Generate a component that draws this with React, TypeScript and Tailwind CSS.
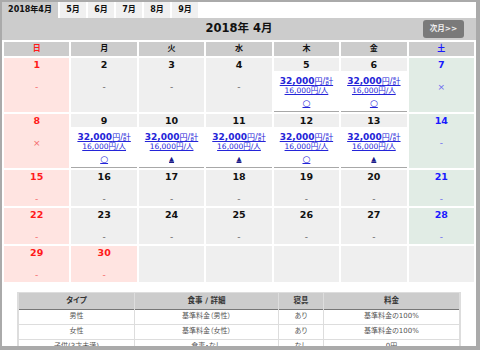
import React from 'react';

type Kind = 'sun' | 'sat' | 'wk' | 'none';

interface Day {
  d?: number;
  kind: Kind;
  mark?: string;
  price?: '○' | '▲';
}

const wk = (d: number, extra: Partial<Day> = {}): Day => ({ d, kind: 'wk', mark: '-', ...extra });

const rows: Day[][] = [
  [
    { d: 1, kind: 'sun', mark: '-' },
    wk(2),
    wk(3),
    wk(4),
    wk(5, { price: '○' }),
    wk(6, { price: '○' }),
    { d: 7, kind: 'sat', mark: '×' },
  ],
  [
    { d: 8, kind: 'sun', mark: '×' },
    wk(9, { price: '○' }),
    wk(10, { price: '▲' }),
    wk(11, { price: '▲' }),
    wk(12, { price: '○' }),
    wk(13, { price: '▲' }),
    { d: 14, kind: 'sat', mark: '-' },
  ],
  [{ d: 15, kind: 'sun', mark: '-' }, wk(16), wk(17), wk(18), wk(19), wk(20), { d: 21, kind: 'sat', mark: '-' }],
  [{ d: 22, kind: 'sun', mark: '-' }, wk(23), wk(24), wk(25), wk(26), wk(27), { d: 28, kind: 'sat', mark: '-' }],
  [
    { d: 29, kind: 'sun', mark: '-' },
    { d: 30, kind: 'sun', mark: '-' },
    { kind: 'none' },
    { kind: 'none' },
    { kind: 'none' },
    { kind: 'none' },
    { kind: 'none' },
  ],
];

const bgFor: Record<Kind, string> = {
  sun: 'bg-[#ffe4e1]',
  sat: 'bg-[#e1ece5]',
  wk: 'bg-[#efefef]',
  none: 'bg-[#efefef]',
};

const numColor: Record<Kind, string> = {
  sun: 'text-[#ff1a1a]',
  sat: 'text-[#1a1aff]',
  wk: 'text-[#111111]',
  none: '',
};

const markColor: Record<Kind, string> = {
  sun: 'text-[#f46a6a]',
  sat: 'text-[#6a6af0]',
  wk: 'text-[#666666]',
  none: '',
};

const Cell: React.FC<{ day: Day }> = ({ day }) => {
  if (day.kind === 'none') return <div className={`${bgFor.none} min-h-[36px]`} />;
  return (
    <div className={`${bgFor[day.kind]} flex flex-col pt-px`}>
      <div className={`h-[12px] leading-[12px] text-center text-[9.5px] font-bold ${numColor[day.kind]}`}>{day.d}</div>
      {day.price ? (
        <div className="bg-white border-b border-[#a8a8a8] pt-[2px] pb-[2px] flex flex-col items-center text-[#2424d8]">
          <div className="h-[12px] leading-[12px] underline whitespace-nowrap">
            <span className="text-[9px] font-bold">32,000</span>
            <span className="text-[8px]">円/計</span>
          </div>
          <div className="h-[12px] leading-[12px] underline text-[7.5px] whitespace-nowrap">16,000円/人</div>
          <div
            className={`h-[12px] leading-[12px] underline ${
              day.price === '▲' ? 'text-[6.5px] text-[#1c1c8a]' : 'text-[9px] text-[#2424d8]'
            }`}
          >
            {day.price}
          </div>
        </div>
      ) : (
        <div className={`pt-[10px] pb-px h-[23px] leading-[12px] text-center text-[9px] ${markColor[day.kind]}`}>
          {day.mark}
        </div>
      )}
    </div>
  );
};

const weekNames = ['日', '月', '火', '水', '木', '金', '土'];
const months = ['5月', '6月', '7月', '8月', '9月'];

const tableRows = [
  ['男性', '基準料金（男性）', 'あり', '基準料金の100%'],
  ['女性', '基準料金（女性）', 'あり', '基準料金の100%'],
  ['子供(3才未満)', '食事・なし', 'なし', '0円'],
];

export default function App() {
  return (
    <div
      className="w-[480px] h-[350px] overflow-hidden bg-white border-[#aaaaaa] border-l-2 border-t-2 border-r-4 border-b-4 text-[#111]"
      style={{ fontFamily: '"DejaVu Sans", "Noto Sans CJK JP", sans-serif' }}
    >
      {/* Month tabs */}
      <div className="flex gap-[2px] h-[16px]">
        <div className="w-[56px] bg-[#cccccc] flex items-center justify-center text-[8px] font-bold">2018年4月</div>
        {months.map((m) => (
          <div key={m} className="w-[26px] bg-[#f0f0f0] flex items-center justify-center text-[8px] font-bold">
            {m}
          </div>
        ))}
      </div>

      {/* Title bar */}
      <div className="h-[22px] bg-[#cccccc] grid grid-cols-[1fr_auto_1fr] items-center">
        <div />
        <div className="text-[11.5px] font-bold">2018年 4月</div>
        <div className="flex justify-end pr-[12px]">
          <div className="w-[41px] h-[18px] rounded-[3px] bg-[#7a7a7a] text-[#f0f0f0] text-[7.5px] font-bold flex items-center justify-center">
            次月&gt;&gt;
          </div>
        </div>
      </div>

      {/* Calendar */}
      <div className="grid grid-cols-7 gap-[2px] p-[2px]">
        {weekNames.map((w, i) => (
          <div
            key={w}
            className={`h-[14px] bg-[#cccccc] flex items-center justify-center text-[8px] font-bold ${
              i === 0 ? 'text-[#ff1a1a]' : i === 6 ? 'text-[#1a1aff]' : 'text-[#111]'
            }`}
          >
            {w}
          </div>
        ))}
        {rows.map((r, ri) => r.map((day, ci) => <Cell key={`${ri}-${ci}`} day={day} />))}
      </div>

      {/* Plan table */}
      <div className="mx-[15px] mt-[8px] border border-[#dddddd]">
        <table className="w-full border-collapse table-fixed text-[7px] [font-feature-settings:'palt']">
          <colgroup>
            <col className="w-[116px]" />
            <col className="w-[144px]" />
            <col className="w-[45px]" />
            <col />
          </colgroup>
          <thead>
            <tr className="h-[16px] bg-[#cccccc] border-b border-[#777777]">
              {['タイプ', '食事 / 詳細', '寝具', '料金'].map((h) => (
                <th key={h} className="font-bold text-[7.5px] text-[#333] border-x border-[#dddddd]">
                  {h}
                </th>
              ))}
            </tr>
          </thead>
          <tbody>
            {tableRows.map((tr, i) => (
              <tr key={i} className="h-[15px] border-b border-[#dddddd]">
                {tr.map((c, j) => (
                  <td key={j} className="text-center text-[#555] border-x border-[#dddddd]">
                    {c}
                  </td>
                ))}
              </tr>
            ))}
          </tbody>
        </table>
      </div>
    </div>
  );
}
